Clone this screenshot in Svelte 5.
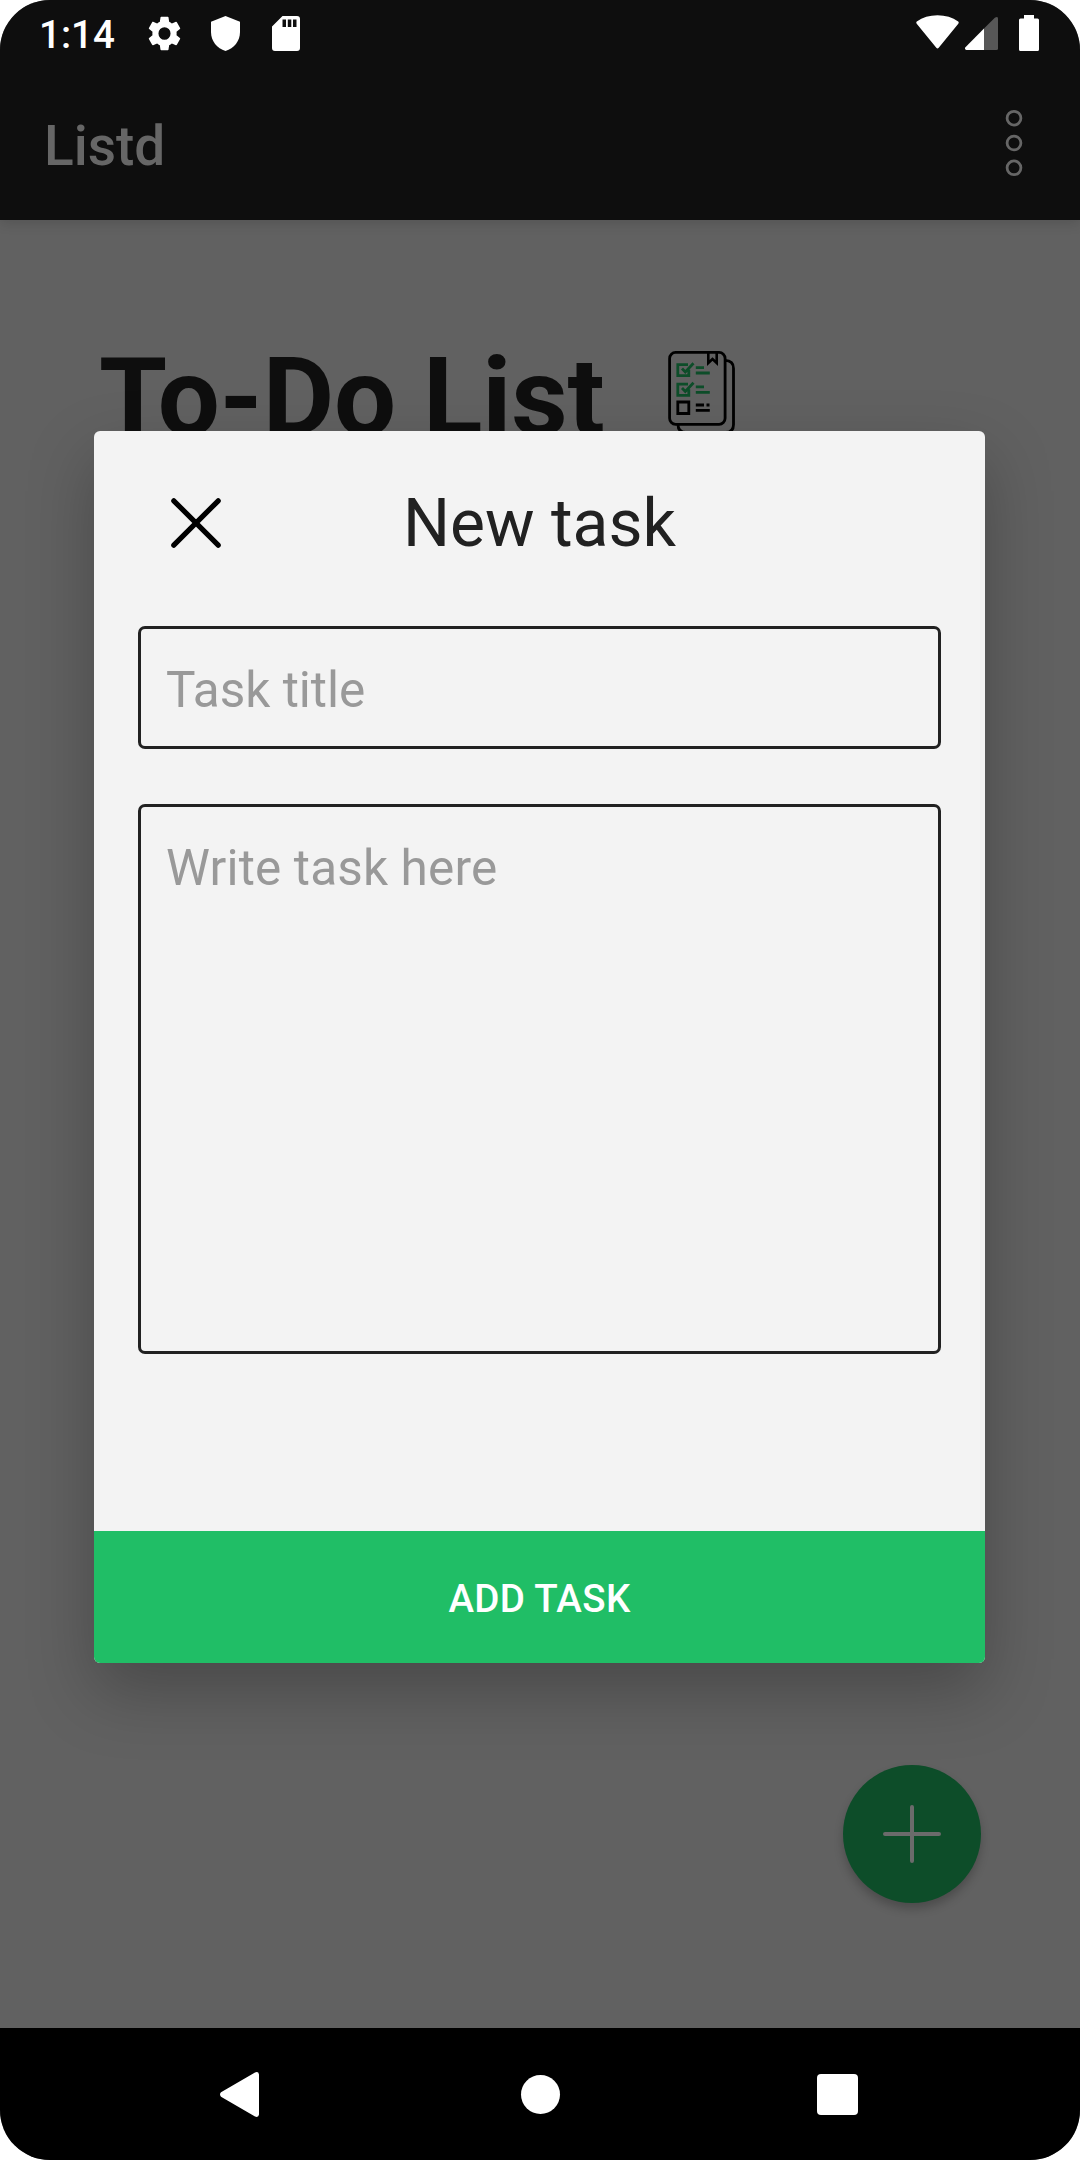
<script>
  let title = $state('');
  let body = $state('');
</script>

<div class="screen">
  <header>
    <div class="status">
      <span class="clock">1:14</span>
      <svg class="gear" viewBox="2.2 2 19.6 20" preserveAspectRatio="none"><path fill="#fff" d="M19.14 12.94c.04-.3.06-.61.06-.94 0-.32-.02-.64-.07-.94l2.03-1.58a.49.49 0 0 0 .12-.61l-1.92-3.32a.488.488 0 0 0-.59-.22l-2.39.96c-.5-.38-1.03-.7-1.62-.94l-.36-2.54a.484.484 0 0 0-.48-.41h-3.84c-.24 0-.43.17-.47.41l-.36 2.54c-.59.24-1.13.57-1.62.94l-2.39-.96c-.22-.08-.47 0-.59.22L2.74 8.87c-.12.21-.08.47.12.61l2.03 1.58c-.05.3-.09.63-.09.94s.02.64.07.94l-2.03 1.58a.49.49 0 0 0-.12.61l1.92 3.32c.12.22.37.29.59.22l2.39-.96c.5.38 1.03.7 1.62.94l.36 2.54c.05.24.24.41.48.41h3.84c.24 0 .44-.17.47-.41l.36-2.54c.59-.24 1.13-.56 1.62-.94l2.39.96c.22.08.47 0 .59-.22l1.92-3.32a.49.49 0 0 0-.12-.61zM12 15.6a3.6 3.6 0 1 1 0-7.2 3.6 3.6 0 0 1 0 7.2z"/></svg>
      <svg class="shield" viewBox="0 0 29 35"><path fill="#fff" d="M14.5 0 29 5.8V16c0 9-6 16.600-14.500 19C6 32.600 0 25 0 16V5.800z"/></svg>
      <svg class="card" viewBox="0 0 28 35"><path fill="#fff" fill-rule="evenodd" d="M10.500 0H25a3 3 0 0 1 3 3v29a3 3 0 0 1-3 3H3a3 3 0 0 1-3-3V10.500zM10.500 3.500v7.500h3.500V3.500zM15.800 3.500v7.500h3.500V3.500zM21 3.500v7.500h3.500V3.500z"/></svg>
      <span class="grow"></span>
      <svg class="wifi" viewBox="0 0 43 34"><path fill="#fff" d="M.8 6.400C6.500 2.300 13.500.3 21.500.3s15 2 20.700 6.100q1 1 .1 2.300L22.700 32.800q-1.200 1.200-2.400 0L.7 8.700q-.9-1.300.1-2.300z"/></svg>
      <svg class="signal" viewBox="0 0 33 33"><path fill="#575757" d="M19 11.500 29.800.7Q31 0 32 0q1 .2 1 1.500V31.500q0 1.500-1.500 1.500H19z"/><path fill="#fff" d="M19 11.500V33H1.300Q-.6 32.500.2 30.400z"/></svg>
      <svg class="battery" viewBox="0 0 20 36"><path fill="#fff" d="M5 0h10v3.500h3.500Q20 3.500 20 5v29.500q0 1.500-1.500 1.500h-17Q0 36 0 34.500V5q0-1.500 1.500-1.500H5z"/></svg>
    </div>
    <div class="appbar">
      <span class="name">Listd</span>
      <svg class="menu" viewBox="0 0 18 68" fill="none" stroke="#666" stroke-width="2.800"><circle cx="9" cy="9.200" r="6.900"/><circle cx="9" cy="34" r="6.900"/><circle cx="9" cy="58.800" r="6.900"/></svg>
    </div>
  </header>

  <main>
    <div class="heading">
      <h1>To-Do List</h1>
      <svg class="list" viewBox="0 0 68 92" fill="none" stroke="#000" stroke-width="2.800">
        <path d="M57 9.400q8.500.2 8.500 8v56q0 8-8 8H18q-8 0-8-8"/>
        <rect x="1.600" y="1.400" width="55.500" height="71.900" rx="6"/>
        <path d="M40.300 1.500v10.500l4.200-4 4.200 4V1.500" stroke-width="2.600"/>
        <g stroke="#0d4d29" stroke-width="2.800">
          <path d="M20 13.700H9.800v11h11v-6M14 17.500l3.300 3.500 8.200-8.700M27.800 16.700H36M27.800 22h14"/>
          <path d="M20 33.100H9.800v11.200h11v-6M14 37l3.300 3.500 8.200-8.700M27.800 35.800H36M27.800 41.400h14"/>
        </g>
        <path d="M9.800 51h11v11.500h-11zM27.800 54H36M38.500 54h3M27.800 59.400h14"/>
      </svg>
    </div>
    <button class="fab" aria-label="New"><svg viewBox="0 0 60 60"><path d="M30 3v54M3 30h54" stroke="#6b6b6b" stroke-width="4" stroke-linecap="round"/></svg></button>
  </main>

  <nav>
    <svg class="back" viewBox="0 0 39 45"><path fill="#fff" d="M1 20.300 35 .5q3.500-1.400 4 2v40q-.5 3.400-4 2L1 24.700q-2-2.200 0-4.400z"/></svg>
    <span class="home"></span>
    <span class="recent"></span>
  </nav>

  <section class="dialog">
    <div class="top">
      <svg class="close" viewBox="0 0 50 50"><path d="M2.800 2.800l44.400 44.400M47.200 2.800 2.800 47.200" stroke="#000" stroke-width="5.200" stroke-linecap="round"/></svg>
      <h2>New task</h2>
    </div>
    <input placeholder="Task title" bind:value={title} />
    <textarea placeholder="Write task here" bind:value={body}></textarea>
    <button class="add">ADD TASK</button>
  </section>
</div>

<style>
  :global(body) { margin: 0; background: #fff; }
  .screen, .screen * { box-sizing: border-box; }
  .screen {
    position: relative;
    display: flex;
    flex-direction: column;
    width: 1080px;
    height: 2160px;
    overflow: hidden;
    border-radius: 50px;
    background: #616161;
    font-family: Roboto, sans-serif;
  }
  svg { display: block; flex: none; }
  h1, h2 { margin: 0; }
  button { border: 0; padding: 0; font-family: inherit; }

  header {
    height: 220px;
    background: #0e0e0e;
    box-shadow: 0 3px 12px rgba(0, 0, 0, .14);
    z-index: 1;
  }
  .status { display: flex; align-items: flex-start; height: 66px; padding: 16px 41px 0 39px; }
  .clock { width: 109px; margin-top: -4px; font-size: 38.500px; line-height: 46px; font-weight: 500; color: #fff; white-space: nowrap; }
  .gear { width: 33px; height: 35px; }
  .shield { width: 29px; height: 35px; margin-left: 30px; }
  .card { width: 28px; height: 35px; margin-left: 32px; }
  .grow { flex: 1; }
  .wifi { width: 43px; height: 34px; margin: -1px 6px 0 0; }
  .signal { width: 33px; height: 33px; margin: 1px 21px 0 0; }
  .battery { width: 20px; height: 36px; margin-top: -1px; }
  .appbar { display: flex; align-items: flex-start; justify-content: space-between; height: 154px; padding: 43px 57px 0 44px; }
  .name { margin-top: 5px; font-size: 55px; line-height: 64px; font-weight: 500; color: #666; }
  .menu { width: 18px; height: 68px; }

  main { flex: 1; display: flex; flex-direction: column; justify-content: space-between; padding: 113px 99px 125px; }
  .heading { display: flex; align-items: flex-start; }
  h1 { width: 569px; font-size: 110px; line-height: 130px; font-weight: 700; letter-spacing: -.2px; color: #0e0e0e; white-space: nowrap; }
  .list { width: 68px; height: 92px; margin-top: 18px; }
  .fab {
    display: grid;
    place-items: center;
    align-self: flex-end;
    width: 138px;
    height: 138px;
    border-radius: 50%;
    background: #0d4d29;
    box-shadow: 0 6px 10px rgba(0, 0, 0, .22);
  }
  .fab svg { width: 60px; height: 60px; }

  nav { display: grid; grid-template-columns: 301px 296px 41px; align-items: center; height: 132px; padding-left: 220px; background: #000; }
  .back { width: 39px; height: 45px; }
  .home { width: 39px; height: 39px; border-radius: 50%; background: #fff; }
  .recent { width: 41px; height: 41px; border-radius: 4px; background: #fff; }

  .dialog {
    position: absolute;
    z-index: 2;
    left: 94px;
    top: 431px;
    display: flex;
    flex-direction: column;
    width: 891px;
    height: 1232px;
    padding: 0 44px;
    overflow: hidden;
    border-radius: 6px;
    background: #f3f3f3;
    box-shadow: 0 28px 66px rgba(0, 0, 0, .25);
  }
  .top { display: grid; grid-template-columns: 83px 1fr 83px; align-items: center; height: 195px; padding-bottom: 12px; }
  .close { width: 50px; height: 50px; margin-left: 33px; }
  h2 { padding-top: 1px; font-size: 66px; line-height: 77px; font-weight: 400; text-align: center; color: #212121; }
  input, textarea {
    display: block;
    width: 803px;
    margin: 0;
    border: 3px solid #212121;
    border-radius: 7px;
    outline: 0;
    background: transparent;
    font: 400 49.500px/58px Roboto, sans-serif;
    color: #212121;
    resize: none;
  }
  input { height: 123px; padding: 5px 25px 0; }
  textarea { height: 550px; margin-top: 55px; padding: 32px 25px; letter-spacing: .15px; }
  input::placeholder, textarea::placeholder { color: #999; opacity: 1; }
  .add {
    margin: auto -44px 0;
    height: 132px;
    padding-top: 3px;
    background: #20be66;
    color: #fff;
    font-size: 38.500px;
    font-weight: 500;
    letter-spacing: .35px;
  }
</style>
